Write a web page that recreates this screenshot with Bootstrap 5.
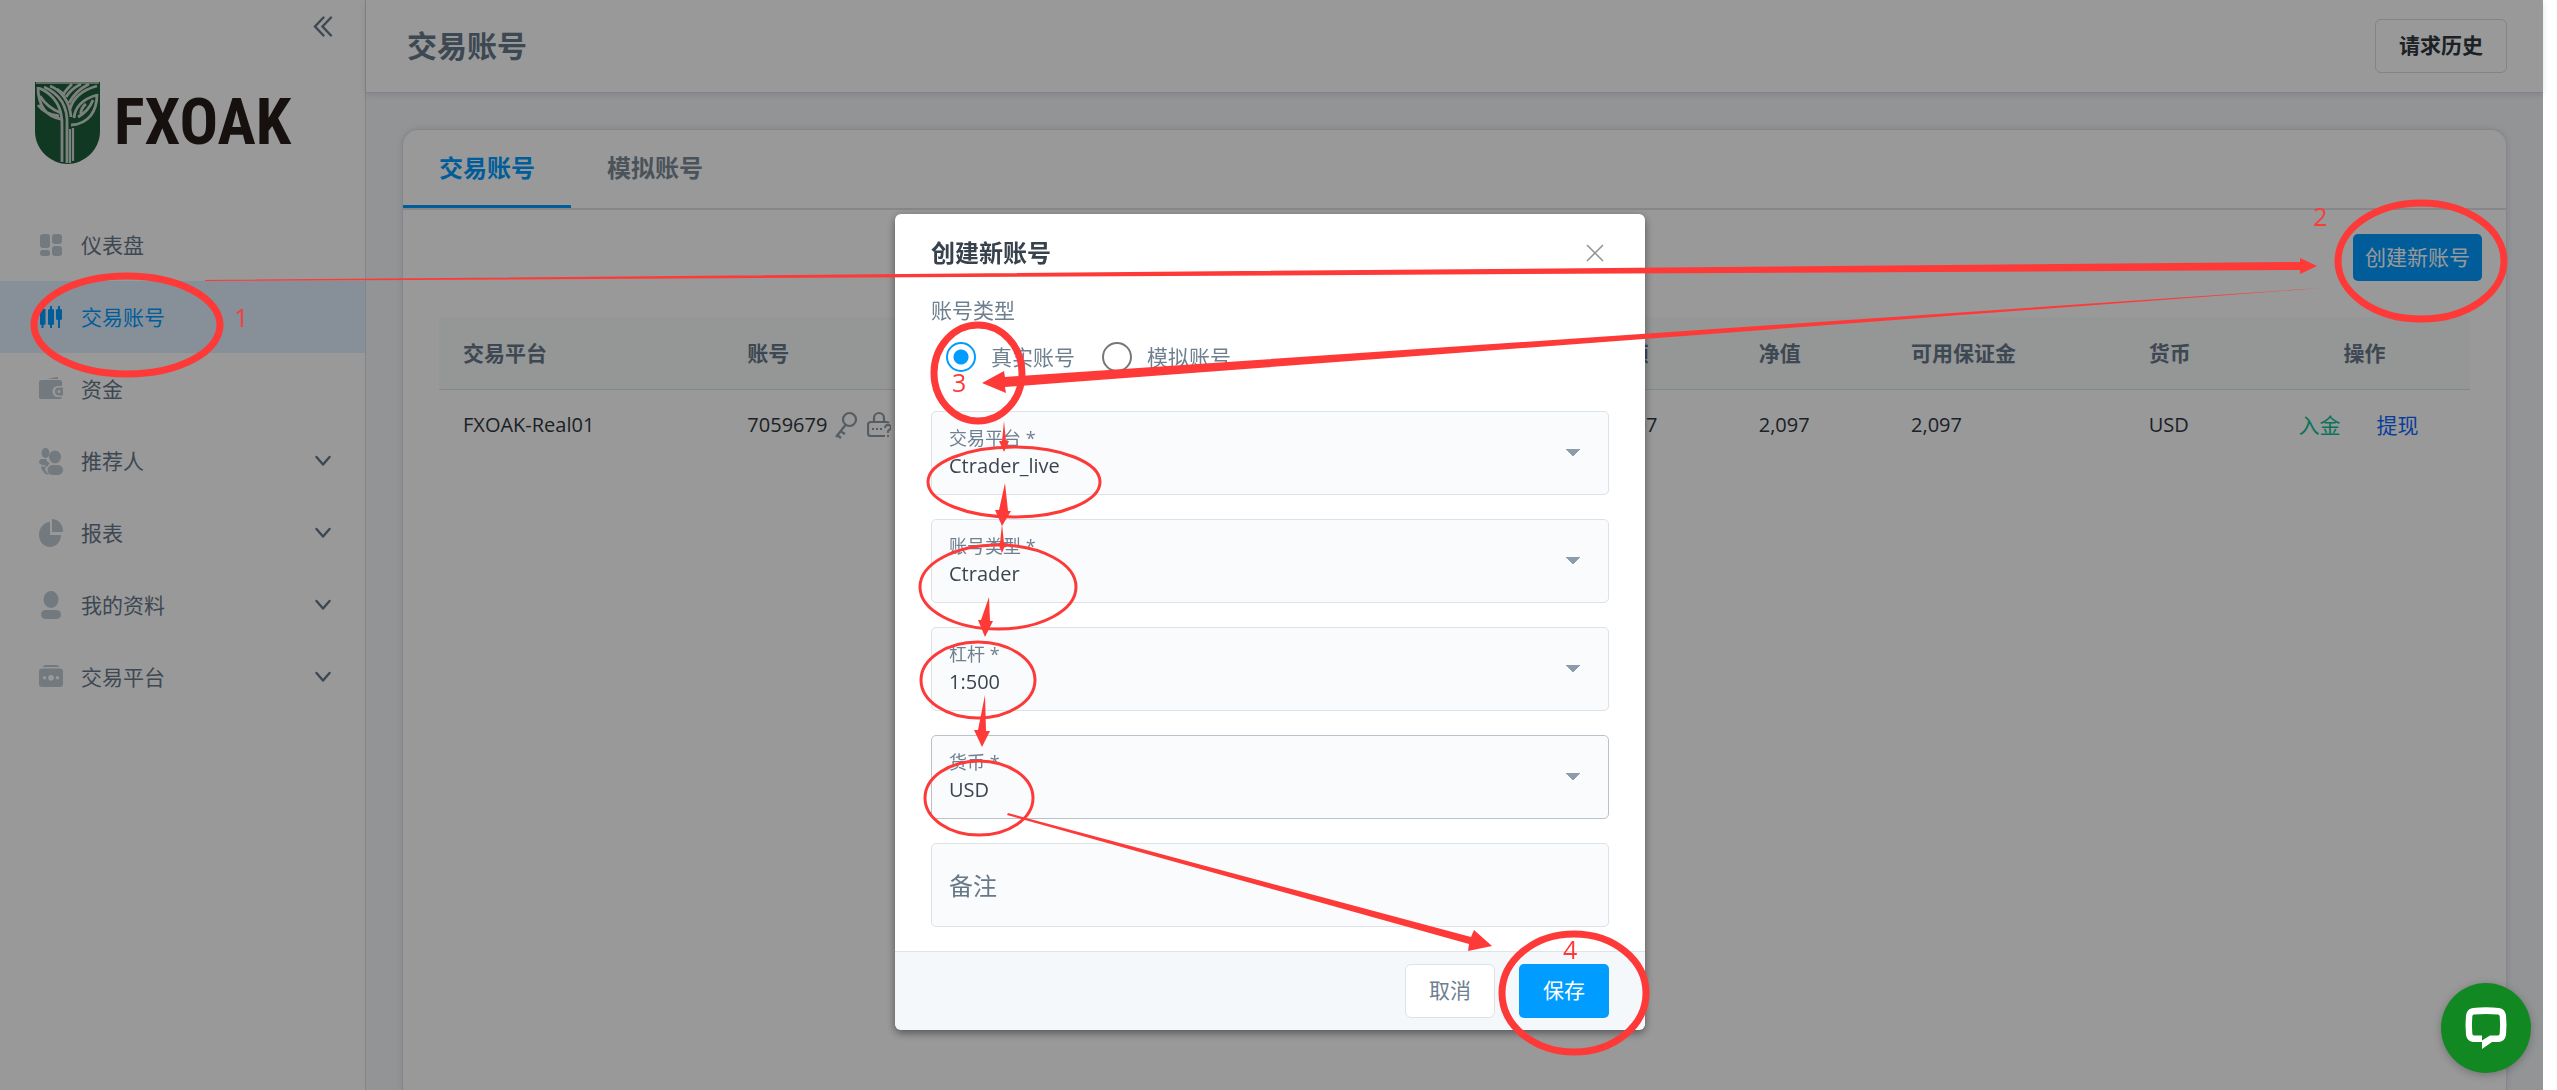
<!DOCTYPE html>
<html lang="zh-CN">
<head>
<meta charset="utf-8">
<meta name="viewport" content="width=device-width, initial-scale=1">
<title>交易账号</title>
<link href="https://cdn.jsdelivr.net/npm/bootstrap@5.3.0/dist/css/bootstrap.min.css" rel="stylesheet">
<style>
:root{--ink:#30373f;--slate:#67788a;--blue:#009cff;--line:#e0e5ea}
html,body{height:100%}
body{font-family:"Open Sans","Noto Sans CJK SC",sans-serif;font-size:21px;line-height:30px;color:var(--ink);background:#fff;overflow:hidden;padding-right:14px}
.side-panel{width:366px;flex:none;border-right:1px solid #d9dce2;background:#fff}
.collapse-row{height:81px;padding:16px 32px}
.icon-btn{border:0;background:none;padding:0;line-height:0;color:var(--slate)}
.brand{height:128px;padding-left:35px;gap:14px;text-decoration:none;color:#261c18;align-items:flex-start}
.brand-name{font-family:"Roboto Condensed","Liberation Sans Narrow","Liberation Sans",sans-serif;font-weight:700;font-size:64px;line-height:84px}
.side-link{height:72px;padding:0 34px 0 39px;color:var(--slate);gap:18px;display:flex;align-items:center;text-decoration:none}
.side-link .pic{width:24px;height:28px;flex:none;color:#bfcad4}
.side-link.on{background:#e2f1ff;color:var(--blue)}
.side-link.on .pic{color:var(--blue)}
.side-link .chev{margin-left:auto}
.content-side{background:#f5f7fb}
.top-bar{height:93px;padding:0 36px 0 41px;background:#fff;border-bottom:1px solid #d9dee3;box-shadow:0 2px 6px rgba(60,80,90,.15)}
.top-bar h1{font-size:30px;font-weight:700;color:var(--slate);margin:0;line-height:40px}
.btn-hist{height:54px;width:132px;padding:0;border:1px solid #d8dde3;border-radius:6px;font-size:21px;font-weight:700;color:var(--ink)}
.panel{margin:36px 36px 0;background:#fff;border:1px solid #dde3e8;border-bottom:0;border-radius:16px 16px 0 0;box-shadow:0 0 6px rgba(60,80,90,.15)}
.tab-strip{height:80px;border-bottom:2px solid #dfdfe8}
.tab-strip a{height:78px;padding:0 36px;font-size:24px;font-weight:700;color:#7d8b96;text-decoration:none;display:flex;align-items:center;border-bottom:3px solid transparent}
.tab-strip a.on{color:var(--blue);border-color:var(--blue)}
.btn-blue{background:var(--blue);color:#fff;border:0;border-radius:5px;font-size:21px;padding:0}
.btn-blue:hover{background:#0088e0;color:#fff}
.new-row{padding:24px 24px 36px}
.btn-new{width:129px;height:47px}
.acc-wrap{padding:0 36px}
.acc-table{table-layout:fixed;--bs-table-color:var(--ink);margin:0}
.acc-table th{height:72px;padding:0 24px;vertical-align:middle;background:#f8fbfa;color:var(--slate);border-bottom:1px solid #dde3e3}
.acc-table td{height:72px;padding:0 24px;vertical-align:middle;border:0;font-size:20px}
.acc-table th:last-child,.acc-table td:last-child{padding:0 24px 0 16px}
.acc-table td:last-child{padding-right:36px}
.acc-table td a{text-decoration:none;font-size:21px}
.acts{gap:36px}
.go-in{color:#10c297}.go-out{color:#1169ff}
.tiny-pic{width:24px;height:28px}
.shade{background:rgba(0,0,0,.4);right:14px;left:0;width:auto;padding-right:3px;overflow:hidden}
.new-acc{max-width:750px;margin-top:214px}
.new-acc .modal-content{border:0;border-radius:6px;box-shadow:0 3px 8px rgba(0,0,0,.45);overflow:hidden;color:var(--ink)}
.new-acc .modal-header{border:0;padding:0 41px 2px 36px;height:80px}
.new-acc .modal-title{font-size:24px;font-weight:700;line-height:32px;color:#37424d}
.new-acc .modal-body{padding:0 36px 24px}
.kind{color:#6e7f8f;line-height:32px;margin:2px 0 0;padding-bottom:14px;font-size:21px;float:none}
.kinds{height:33px;padding-left:15px;gap:27px;margin-bottom:38px}
.kinds .form-check{margin:0;min-height:0;padding:0;display:flex;align-items:center;gap:15px;color:#6e7f8f}
.kinds .form-check-input{float:none;margin:0;width:30px;height:30px;border:2px solid #777;background-color:#fff}
.kinds .form-check-input:checked{border-color:var(--blue);background-image:radial-gradient(circle,var(--blue) 7px,#fff 8px)}
.fields{display:grid;gap:24px}
.fields .form-select,.fields .form-control{height:84px;min-height:0;border:1px solid #dde2e8;border-radius:5px;background-color:#fafbfd;padding:0 17px;font-size:20px;color:#3b4550;line-height:30px}
.fields .form-select{padding-top:25px;background-image:linear-gradient(to bottom left,#8d9cab 50%,transparent 50%),linear-gradient(to bottom right,#8d9cab 50%,transparent 50%);background-size:7px 8px;background-position:right 35px center,right 28px center;background-repeat:no-repeat}
.fields .form-select.near{border-color:#b9c2cb}
.fields label{height:auto;padding:14px 17px 0;font-size:18px;line-height:24px;transform:none!important;opacity:1!important;color:#6e7f8f!important}
.fields .form-control{font-size:24px}
.fields .form-control::placeholder{color:#677888;opacity:1}
.new-acc .modal-footer{background:#f4f8fb;border-top:1px solid #dde3e8;height:79px;padding:0 36px;gap:24px}
.new-acc .modal-footer>*{margin:0;width:90px;height:54px;font-size:21px}
.btn-plain{background:#fff;border:1px solid #dde2e8;border-radius:6px;color:#6e7f8f;padding:0}
.chat-dot{position:fixed;right:26px;bottom:17px;width:90px;height:90px;border:0;border-radius:50%;background:#118822;z-index:1060;box-shadow:0 2px 8px rgba(0,0,0,.25);padding:0}
.marks{position:fixed;left:0;top:0;z-index:1070;pointer-events:none}
.marks text{font-family:"Open Sans",sans-serif;font-size:25px;fill:#fd3a38}
</style>
<script src="https://cdn.jsdelivr.net/npm/bootstrap@5.3.0/dist/js/bootstrap.bundle.min.js"></script>
</head>
<body>
<svg width="0" height="0" class="position-absolute" aria-hidden="true"><defs>
<symbol id="chev" viewBox="0 0 16 12"><path d="M1.500 2 8 9.500 14.500 2" fill="none" stroke="currentColor" stroke-width="2.400" stroke-linecap="round" stroke-linejoin="round"/></symbol>
</defs></svg>
<div class="d-flex min-vh-100">
  <aside class="side-panel">
    <div class="collapse-row d-flex justify-content-end align-items-start">
      <button class="icon-btn" type="button" aria-label="收起"><svg width="20" height="21" viewBox="0 0 20 21" fill="none" stroke="currentColor" stroke-width="2.400" stroke-linecap="round"><path d="M10.500 1.500 2 10.500l8.500 9M18 1.500 9.500 10.500l8.500 9"/></svg></button>
    </div>
    <a class="brand d-flex" href="#">
      <svg width="65" height="84" viewBox="0 0 65 84"><path d="M0 1H65V50C65 70 48 83 32.500 83S0 70 0 50Z" fill="#1b5e3b"/><g fill="none" stroke="#cfd8d2" stroke-width="2.800"><path d="M1 2H64" stroke-width="1.500"/><path d="M27 81V46C28 24 18 13 4 7M32 82V44C33 26 25 13 9 6" /><path d="M35 82V48M38 80V47" stroke-width="2.200"/><path d="M3 6C3 24 11 36 26 38M5 15C10 23 18 29 26 32M3 24C8 31 15 34 24 35M15 5C26 9 35 21 36 36M22 8 30 14"/><path d="M35 28C38 18 47 9 62 5M31 16C36 8 42 5 46 3M34 22C38 14 46 7 54 3M29 12C32 8 35 5 37 3"/><path d="M62 13C62 30 54 43 36 44M39 37C40 26 48 18 62 14M43 36C52 31 56 24 58 19M46 34C45 30 48 25 51 23"/></g></svg>
      <span class="brand-name">FXOAK</span>
    </a>
    <nav>
      <a class="side-link" href="#"><svg class="pic" viewBox="0 0 24 28" fill="currentColor"><rect x="1" y="3" width="10" height="14" rx="3"/><rect x="1" y="19" width="10" height="6" rx="2.500"/><rect x="13" y="3" width="10" height="10" rx="3"/><rect x="13" y="15" width="10" height="10" rx="3"/></svg><span>仪表盘</span></a>
      <a class="side-link on" href="#"><svg class="pic" viewBox="0 0 24 28" fill="currentColor"><path d="M1 7q0-.5 1.500-1V3.500h2V6h2V21q0 1-2 1v3h-2v-3Q1 22 1 21zM9 7q0-1 2-1V3h2v3q2 0 2 1V21q0 1-2 1v3h-2v-3q-2 0-2-1zM17 7q0-1 2-1V3h2v3q2 0 2 1v9q0 1-2 1v8h-2v-8q-2 0-2-1z"/></svg><span>交易账号</span></a>
      <a class="side-link" href="#"><svg class="pic" viewBox="0 0 24 28" fill="currentColor"><path d="M8 4 18 2c1 0 1 .6 1 2z"/><path d="M3 5H21q2 0 2 2v4h-4a5.500 5.500 0 0 0 0 11h4v0q0 2-2 2H3q-3 0-3-2V7q0-2 3-2z"/><path d="M24 12.500h-4a4 4 0 0 0 0 8h4zM20 15a1.500 1.500 0 1 1 0 3 1.500 1.500 0 0 1 0-3z" fill-rule="evenodd"/></svg><span>资金</span></a>
      <a class="side-link" href="#"><svg class="pic" viewBox="0 0 24 28" fill="currentColor"><ellipse cx="6.500" cy="6" rx="4" ry="5"/><ellipse cx="16" cy="10" rx="6" ry="6.500"/><path d="M2 12h5q2 4 4 4-2 2-3 4l-3-2-2 0q-3-1-3-3 0-2 2-3z"/><rect x="8.500" y="18" width="15.500" height="10" rx="5"/><path d="M2 19l5 1-1 3q2 2 4 5-6-1-6-5l-1 1z"/></svg><span>推荐人</span><svg class="chev" width="16" height="12"><use href="#chev"/></svg></a>
      <a class="side-link" href="#"><svg class="pic" viewBox="0 0 24 28" fill="currentColor"><path d="M11 3v13h11c0 7-5 12-11 12C5 28 0 23 0 16 0 9 5 3 11 3z"/><path d="M13 0c6 0 11 5 11 13H13z"/></svg><span>报表</span><svg class="chev" width="16" height="12"><use href="#chev"/></svg></a>
      <a class="side-link" href="#"><svg class="pic" viewBox="0 0 24 28" fill="currentColor"><ellipse cx="12" cy="8.500" rx="7.500" ry="8.500"/><rect x="2" y="19" width="20" height="9" rx="4.500"/></svg><span>我的资料</span><svg class="chev" width="16" height="12"><use href="#chev"/></svg></a>
      <a class="side-link" href="#"><svg class="pic" viewBox="0 0 24 28" fill="currentColor"><path d="M4 4q0-2 3-2h10q3 0 3 2z"/><path fill-rule="evenodd" d="M3 5.500H21q3 0 3 3V21q0 3-3 3H3q-3 0-3-3V8.500q0-3 3-3zM12 12a2.800 2.800 0 1 0 0 5.600 2.800 2.800 0 0 0 0-5.600zM5.500 13a1.700 1.700 0 1 0 0 3.400 1.700 1.700 0 0 0 0-3.400zM18.500 13a1.700 1.700 0 1 0 0 3.400 1.700 1.700 0 0 0 0-3.400z"/></svg><span>交易平台</span><svg class="chev" width="16" height="12"><use href="#chev"/></svg></a>
    </nav>
  </aside>
  <main class="content-side flex-grow-1 d-flex flex-column">
    <header class="top-bar d-flex align-items-center justify-content-between">
      <h1>交易账号</h1>
      <button class="btn btn-hist" type="button">请求历史</button>
    </header>
    <section class="panel flex-grow-1">
      <nav class="tab-strip d-flex"><a class="on" href="#">交易账号</a><a href="#">模拟账号</a></nav>
      <div class="new-row d-flex justify-content-end"><button class="btn btn-blue btn-new" type="button">创建新账号</button></div>
      <div class="acc-wrap">
        <table class="table acc-table">
          <colgroup><col style="width:14%"><col style="width:42.300%"><col style="width:7.500%"><col style="width:7.500%"><col style="width:11.700%"><col style="width:7%"><col></colgroup>
          <thead><tr><th scope="col">交易平台</th><th scope="col">账号</th><th scope="col">余额</th><th scope="col">净值</th><th scope="col">可用保证金</th><th scope="col">货币</th><th scope="col" class="text-center">操作</th></tr></thead>
          <tbody><tr><td>FXOAK-Real01</td><td><span class="d-flex align-items-center"><span>7059679</span>
            <svg class="tiny-pic ms-2" viewBox="0 0 24 28" fill="none" stroke="#8e9aa6" stroke-width="2.200"><circle cx="14.500" cy="8.500" r="6.500"/><path d="M10.500 14 1 26M5 20l5 3M2 24l4 3"/></svg>
            <svg class="tiny-pic ms-2" viewBox="0 0 24 28" fill="none" stroke="#8e9aa6" stroke-width="2.200"><path d="M7 11V7a5 5 0 0 1 10 0v4M22 12q-1-1-3-1H4q-3 0-3 3v8q0 3 3 3h14"/><path d="M5 18h2M9 18h2M13 18h2M18 17q0-3 3-3t3 2-3 4v2M21 24v2" stroke-width="1.800"/></svg></span></td>
            <td>2,097</td><td>2,097</td><td>2,097</td><td>USD</td><td class="text-center"><span class="acts d-inline-flex"><a class="go-in" href="#">入金</a><a class="go-out" href="#">提现</a></span></td></tr></tbody>
        </table>
      </div>
    </section>
  </main>
</div>

<div class="modal d-block shade" tabindex="-1" role="dialog" aria-labelledby="dlgTitle">
  <div class="modal-dialog new-acc">
    <form class="modal-content">
      <div class="modal-header d-flex justify-content-between align-items-center">
        <h2 class="modal-title" id="dlgTitle">创建新账号</h2>
        <button class="icon-btn" type="button" aria-label="关闭"><svg width="18" height="18" viewBox="0 0 18 18" stroke="#929292" stroke-width="1.500"><path d="M1 1 17 17M17 1 1 17"/></svg></button>
      </div>
      <div class="modal-body">
        <fieldset>
          <legend class="kind">账号类型</legend>
          <div class="kinds d-flex align-items-center">
            <div class="form-check"><input class="form-check-input" type="radio" name="kind" id="k1" checked><label for="k1">真实账号</label></div>
            <div class="form-check"><input class="form-check-input" type="radio" name="kind" id="k2"><label for="k2">模拟账号</label></div>
          </div>
        </fieldset>
        <div class="fields">
          <div class="form-floating"><select class="form-select" id="f1"><option>Ctrader_live</option></select><label for="f1">交易平台 *</label></div>
          <div class="form-floating"><select class="form-select" id="f2"><option>Ctrader</option></select><label for="f2">账号类型 *</label></div>
          <div class="form-floating"><select class="form-select" id="f3"><option>1:500</option></select><label for="f3">杠杆 *</label></div>
          <div class="form-floating"><select class="form-select near" id="f4"><option>USD</option></select><label for="f4">货币 *</label></div>
          <input class="form-control" type="text" placeholder="备注" aria-label="备注">
        </div>
      </div>
      <div class="modal-footer d-flex align-items-center justify-content-end">
        <button class="btn btn-plain" type="button">取消</button>
        <button class="btn btn-blue" type="submit">保存</button>
      </div>
    </form>
  </div>
</div>

<button class="chat-dot" type="button" aria-label="在线聊天"><svg width="44" height="44" viewBox="0 0 44 44"><path fill="#fff" fill-rule="evenodd" d="M9 2Q22 .5 35 2q6 1 7 7 1 10 0 20-1 6-7 7h-7l-10 7v-7H9q-6-1-7-7-1-10 0-20 1-6 7-7zM10 8.500q-1.500 0-1.700 2-.8 9 0 17 .2 2 1.700 2h8v5l8-5h8q1.500 0 1.700-2 .8-9 0-17-.2-2-1.700-2-12-1.200-24 0z"/></svg></button>

<svg class="marks" width="2557" height="1090" viewBox="0 0 2557 1090">
  <g fill="none" stroke="#fd3a38" stroke-width="7">
    <ellipse cx="127" cy="325" rx="93" ry="49"/><ellipse cx="2421" cy="261" rx="83" ry="58"/><ellipse cx="978" cy="373" rx="44" ry="48"/><ellipse cx="1574" cy="993" rx="72" ry="59"/>
    <g stroke-width="3"><ellipse cx="1014" cy="482" rx="86" ry="35"/><ellipse cx="998" cy="587" rx="78" ry="42"/><ellipse cx="978" cy="680" rx="57" ry="38"/><ellipse cx="979" cy="798" rx="54" ry="37"/></g>
  </g>
  <g fill="#fd3a38">
    <path d="M205 280 2300 262V258L2317 266 2300 274V270L205 281z"/>
    <path d="M2321 288 1005 377 1004 371 982 383 1006 393 1005 387z"/>
    <path d="M1004 421 1002 441H999L1004 452 1009 441H1006z"/>
    <path d="M1005 483 999 510H995L1002 526 1011 511H1008z"/>
    <path d="M1002 524 1000 543H998L1002 553 1006 543H1004z"/>
    <path d="M989 597 981 620H978L985 637 993 621H990z"/>
    <path d="M985 695 978 730H974L982 747 990 731H986z"/>
    <path d="M1008 813 1471 937 1474 930 1492 946 1468 951 1469 944 1007 815z"/>
  </g>
  <text x="234" y="327">1</text><text x="2313" y="226">2</text><text x="952" y="392">3</text><text x="1563" y="959">4</text>
</svg>
</body>
</html>
